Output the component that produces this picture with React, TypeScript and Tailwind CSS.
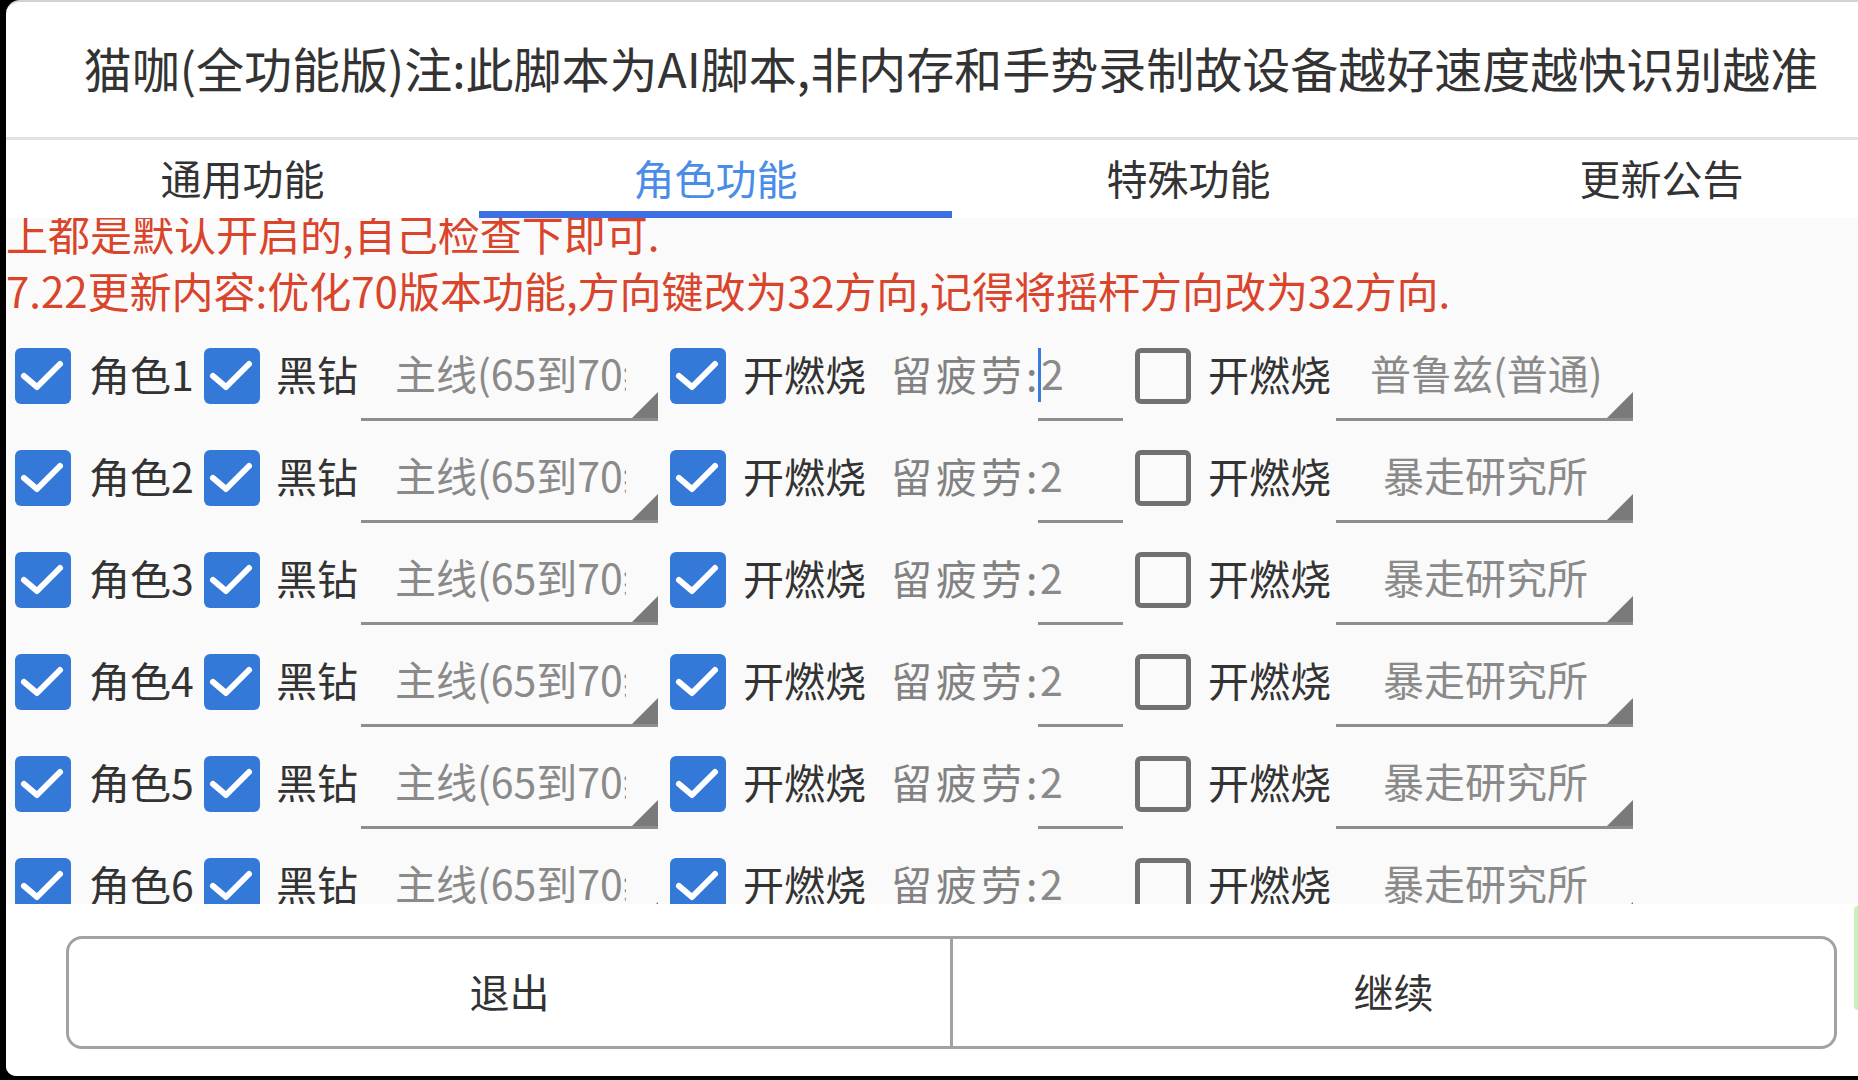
import React from 'react';

const font = { fontFamily: '"Noto Sans CJK SC", "Noto Sans", sans-serif' };

interface BoxProps {
  checked: boolean;
}

const Box: React.FC<BoxProps> = ({ checked }) =>
  checked ? (
    <span className="flex h-[56px] w-[56px] shrink-0 items-center justify-center rounded-[6px] bg-[#3579d8]">
      <svg viewBox="0 0 56 56" className="h-[56px] w-[56px]">
        <polyline
          points="9,28 22,39 45,16"
          fill="none"
          stroke="white"
          strokeWidth="6"
          strokeLinecap="round"
          strokeLinejoin="round"
        />
      </svg>
    </span>
  ) : (
    <span className="h-[56px] w-[56px] shrink-0 rounded-[6px] border-[5px] border-[#717171]" />
  );

interface CheckProps {
  label: string;
  width: string;
  checked?: boolean;
  gap?: string;
}

const Check: React.FC<CheckProps> = ({ label, width, checked = true, gap = 'ml-[17px]' }) => (
  <div className={`flex shrink-0 items-center ${width}`}>
    <Box checked={checked} />
    <span className={`${gap} whitespace-nowrap pb-[5px] text-[41px] leading-none text-[#333]`}>{label}</span>
  </div>
);

interface SpinnerProps {
  text: string;
  center?: boolean;
}

const Spinner: React.FC<SpinnerProps> = ({ text, center }) => (
  <div className="relative flex h-[90px] w-[297px] shrink-0 items-center border-b-[3px] border-[#8e8e8e] pl-[34px] pr-[32px]">
    <div
      className={`min-w-0 flex-1 overflow-hidden whitespace-nowrap pb-[5px] text-[41px] leading-none text-[#8a8a8a] ${
        center ? 'text-center' : ''
      }`}
    >
      {text}
    </div>
    <svg viewBox="0 0 26 26" className="absolute bottom-0 right-0 h-[26px] w-[26px]">
      <polygon points="26,0 26,26 0,26" fill="#7a7a7a" />
    </svg>
  </div>
);

const rows = [
  { n: 1, map: '普鲁兹(普通)', cursor: true },
  { n: 2, map: '暴走研究所', cursor: false },
  { n: 3, map: '暴走研究所', cursor: false },
  { n: 4, map: '暴走研究所', cursor: false },
  { n: 5, map: '暴走研究所', cursor: false },
  { n: 6, map: '暴走研究所', cursor: false },
];

const tabs = ['通用功能', '角色功能', '特殊功能', '更新公告'];

const App: React.FC = () => {
  return (
    <div className="relative flex h-[1080px] w-[1858px] flex-col overflow-hidden bg-black pb-[4px] pl-[6px]" style={font}>
      <div className="flex flex-1 flex-col overflow-hidden rounded-bl-[10px] rounded-tl-[14px] border-t-2 border-[#d2d2d2] bg-white">
        {/* title */}
        <div className="flex h-[135px] shrink-0 items-center justify-center pb-[5px] pl-[38px]">
          <h1 className="whitespace-nowrap text-[48px] leading-none text-[#333]">
            猫咖(全功能版)注:此脚本为AI脚本,非内存和手势录制故设备越好速度越快识别越准
          </h1>
        </div>
        <div className="h-[3px] shrink-0 bg-[#e2e2e2]" />

        {/* tabs */}
        <div className="flex h-[78px] shrink-0 overflow-hidden bg-white">
          {tabs.map((t, i) => (
            <div key={t} className="flex w-[473px] shrink-0 flex-col">
              <div
                className={`flex h-[71px] items-center justify-center pt-[3px] text-[41px] leading-none ${
                  i === 1 ? 'text-[#4a8de8]' : 'text-[#333]'
                }`}
              >
                {t}
              </div>
              <div className={`h-[7px] ${i === 1 ? 'bg-[#3b6fe3]' : ''}`} />
            </div>
          ))}
        </div>

        {/* scroll content */}
        <div className="h-[686px] shrink-0 overflow-hidden bg-[#fafafa]">
          <div className="-mt-[14px] text-[42px] leading-[57px] text-[#d9442b]">
            <p className="whitespace-nowrap">上都是默认开启的,自己检查下即可.</p>
            <p className="whitespace-nowrap">7.22更新内容:优化70版本功能,方向键改为32方向,记得将摇杆方向改为32方向.</p>
          </div>
          <div className="mt-[7px]">
            {rows.map((r) => (
              <div key={r.n} className="flex h-[102px] items-center pl-[9px]">
                <Check label={`角色${r.n}`} width="w-[189px]" gap="ml-[18px]" />
                <Check label="黑钻" width="w-[157px]" gap="ml-[16px]" />
                <Spinner text="主线(65到70级)" />
                <div className="ml-[12px]">
                  <Check label="开燃烧" width="w-[221px]" />
                </div>
                <span className="w-[147px] shrink-0 whitespace-nowrap pb-[5px] text-[41px] leading-none tracking-[4px] text-[#828282]">
                  留疲劳:
                </span>
                <div className="flex h-[90px] w-[85px] shrink-0 items-center border-b-[3px] border-[#8e8e8e]">
                  {r.cursor ? <span className="h-[54px] w-[3px] bg-[#3b7be0]" /> : null}
                  <span className={`${r.cursor ? '' : 'pl-[2px]'} pb-[5px] text-[41px] leading-none text-[#8a8a8a]`}>2</span>
                </div>
                <div className="ml-[12px]">
                  <Check label="开燃烧" width="w-[201px]" checked={false} />
                </div>
                <Spinner text={r.map} center />
              </div>
            ))}
          </div>
        </div>

        {/* buttons */}
        <div className="flex flex-1 items-start bg-white pl-[60px] pr-[21px] pt-[32px]">
          <div className="flex h-[113px] w-full">
            <button className="flex flex-1 items-center justify-center rounded-l-[16px] border-[3px] border-[#a2a2a2] bg-white pb-[4px] text-[40px] leading-none text-[#333]">
              退出
            </button>
            <button className="flex flex-1 items-center justify-center rounded-r-[16px] border-y-[3px] border-r-[3px] border-[#a2a2a2] bg-white pb-[4px] text-[40px] leading-none text-[#333]">
              继续
            </button>
          </div>
        </div>
      </div>
      <div className="absolute right-0 top-[906px] h-[104px] w-[4px] rounded-l-[4px] bg-[#c9efbd]" />
    </div>
  );
};

export default App;
